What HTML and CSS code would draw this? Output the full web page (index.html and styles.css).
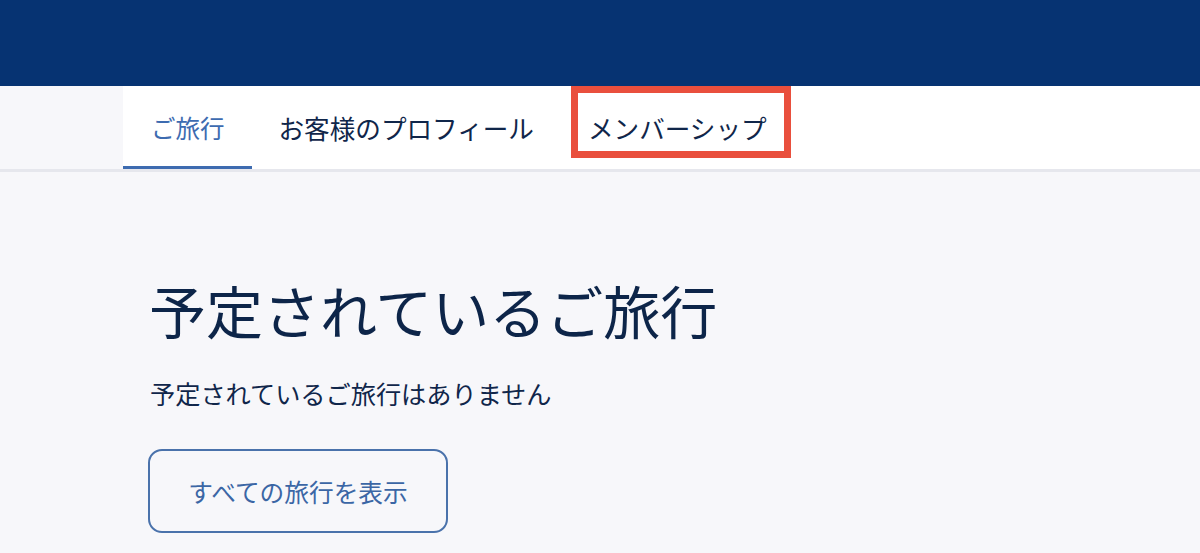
FILE: index.html
```html
<!DOCTYPE html>
<html lang="ja">
<head>
<meta charset="utf-8">
<title>ご旅行</title>
<link rel="stylesheet" href="styles.css">
</head>
<body>
<header class="topbar"></header>
<nav class="tabrow">
  <div class="tabs">
    <a class="tab active">ご旅行</a>
    <a class="tab">お客様のプロフィール</a>
    <a class="tab marked">メンバーシップ<span class="mark"></span></a>
  </div>
</nav>
<main class="content">
  <h1 class="title">予定されているご旅行</h1>
  <p class="empty">予定されているご旅行はありません</p>
  <button class="btn">すべての旅行を表示</button>
</main>
</body>
</html>
```
FILE: styles.css
```css
html, body {
  margin: 0;
  padding: 0;
  background: #f7f7fa;
  font-family: "Noto Sans CJK JP", "Noto Sans", sans-serif;
  color: #10264a;
}
.topbar {
  height: 86px;
  background: #063372;
}
.tabrow {
  display: flex;
  height: 83px;
  border-bottom: 3px solid #e6e7ed;
  background: #f7f7fa;
}
.tabs {
  flex: 1;
  display: flex;
  margin-left: 123px;
  background: #ffffff;
}
.tab {
  position: relative;
  display: flex;
  align-items: center;
  padding: 0 27px;
  font-size: 25.6px;
  color: #10264a;
  white-space: nowrap;
}
.tab.active {
  color: #3d6bb0;
  font-size: 24.5px;
  padding: 0 27px 0 28px;
}
.tab.active::after {
  content: "";
  position: absolute;
  left: 0;
  right: 0;
  bottom: 0;
  height: 3px;
  background: #3d6bb0;
}
.mark {
  position: absolute;
  left: 10px;
  right: 3px;
  top: 0;
  height: 72px;
  border: 7px solid #e94f3d;
  box-sizing: border-box;
}
.content {
  padding: 103px 0 0 149px;
}
.title {
  margin: 0;
  font-size: 57px;
  font-weight: 400;
  line-height: 68px;
  color: #0d2549;
}
.empty {
  margin: 32px 0 0;
  padding-left: 1px;
  font-size: 25.2px;
  line-height: 36px;
  color: #10264a;
}
.btn {
  margin: 38px 0 0 -1px;
  width: 300px;
  height: 84px;
  border: 2px solid #4a72ab;
  border-radius: 14px;
  background: transparent;
  font-family: "Noto Sans CJK JP", "Noto Sans", sans-serif;
  font-size: 24.7px;
  color: #3b66a5;
  padding: 0;
}
```
